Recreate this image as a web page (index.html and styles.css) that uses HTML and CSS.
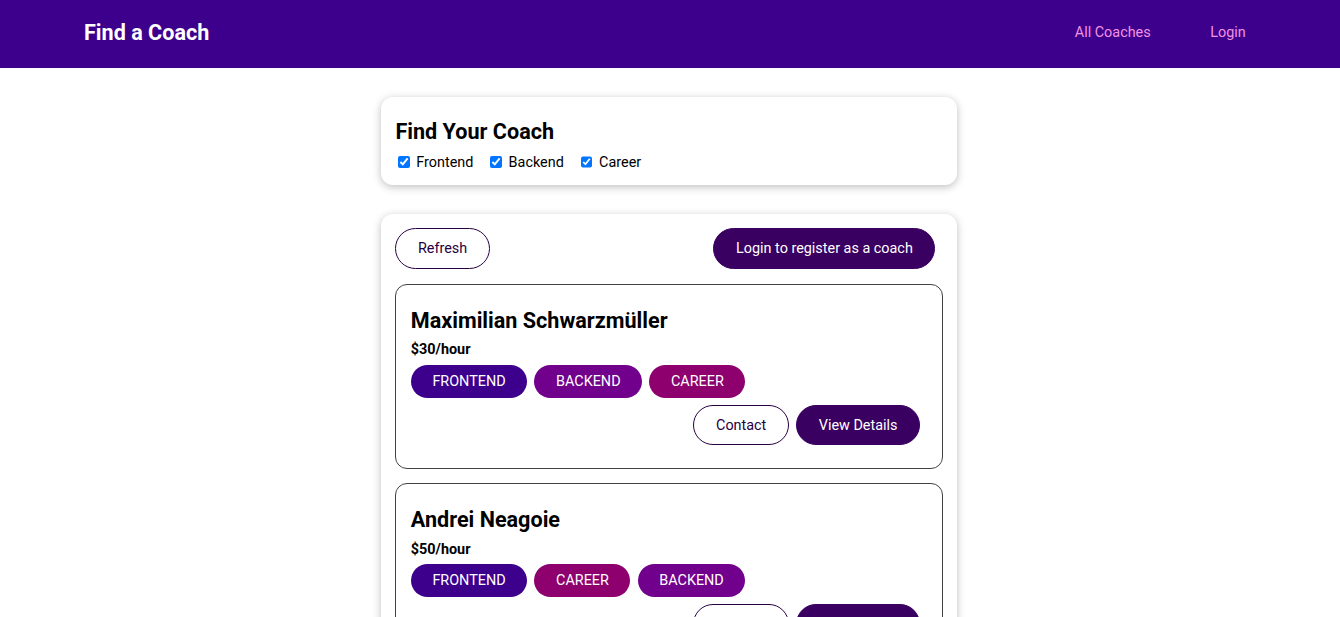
FILE: index.html
```html
<!DOCTYPE html>
<html lang="en">
<head>
<meta charset="utf-8">
<title>Find a Coach</title>
<link rel="stylesheet" href="styles.css">
</head>
<body>
<header class="site-header">
  <nav class="site-nav">
    <h1 class="brand"><a href="#">Find a Coach</a></h1>
    <ul class="nav-links">
      <li><a href="#">All Coaches</a></li>
      <li><a href="#">Login</a></li>
    </ul>
  </nav>
</header>
<main class="page">
  <section class="card filter-card">
    <h2 class="filter-title">Find Your Coach</h2>
    <div class="filter-options">
      <span class="filter-option"><input type="checkbox" id="frontend" checked><label for="frontend">Frontend</label></span>
      <span class="filter-option"><input type="checkbox" id="backend" checked><label for="backend">Backend</label></span>
      <span class="filter-option"><input type="checkbox" id="career" checked><label for="career">Career</label></span>
    </div>
  </section>
  <section class="card list-card">
    <div class="controls">
      <button class="btn btn-outline">Refresh</button>
      <button class="btn">Login to register as a coach</button>
    </div>
    <ul class="coach-list">
      <li class="coach">
        <h3 class="coach-name">Maximilian Schwarzmüller</h3>
        <h4 class="coach-rate">$30/hour</h4>
        <div class="badges">
          <span class="badge frontend">FRONTEND</span><span class="badge backend">BACKEND</span><span class="badge career">CAREER</span>
        </div>
        <div class="actions">
          <button class="btn btn-outline">Contact</button>
          <button class="btn">View Details</button>
        </div>
      </li>
      <li class="coach">
        <h3 class="coach-name">Andrei Neagoie</h3>
        <h4 class="coach-rate">$50/hour</h4>
        <div class="badges">
          <span class="badge frontend">FRONTEND</span><span class="badge career">CAREER</span><span class="badge backend">BACKEND</span>
        </div>
        <div class="actions">
          <button class="btn btn-outline">Contact</button>
          <button class="btn">View Details</button>
        </div>
      </li>
    </ul>
  </section>
</main>
</body>
</html>
```
FILE: styles.css
```css
* { box-sizing: border-box; }

html {
  font-family: "Roboto", "Liberation Sans", sans-serif;
  font-size: 14.4px;
}

body {
  margin: 0;
  color: #000;
}

.site-header {
  width: 100%;
  height: 68px;
  background-color: #3d008d;
  display: flex;
  justify-content: center;
  align-items: center;
  padding-bottom: 3px;
}

.site-nav {
  width: 90%;
  margin: auto;
  display: flex;
  justify-content: space-between;
  align-items: center;
}

.brand {
  margin: 0;
  font-size: 21.6px;
  font-weight: 700;
}

.brand a {
  color: #fff;
  text-decoration: none;
  display: inline-block;
  padding: 0 0 0 17px;
}

.nav-links {
  list-style: none;
  margin: 0 -2.5px 0 0;
  padding: 0;
  display: flex;
}

.nav-links li { margin: 0 7.2px; }

.nav-links a {
  text-decoration: none;
  color: #f391e3;
  display: inline-block;
  padding: 0 21.6px;
  font-size: 14.4px;
  border: 1px solid transparent;
}

.page {
  padding-right: 2px;
  padding-top: 0.1px;
}

.card {
  border-radius: 12px;
  box-shadow: 0 2px 8px rgba(0, 0, 0, 0.26);
  padding: 14.4px;
  margin: 28.8px auto;
  max-width: 576px;
  background: #fff;
}

.filter-title {
  margin: 8.2px 0 9.2px;
  font-size: 21.6px;
  font-weight: 700;
}

.filter-options {
  display: flex;
  align-items: center;
}

.filter-option {
  margin-right: 14.4px;
  display: inline-flex;
  align-items: center;
}

.filter-option input {
  width: 11.7px;
  height: 11.7px;
  margin: 0 3px 0 2.6px;
}

.filter-option label {
  margin-left: 3.6px;
  font-size: 14.4px;
  line-height: 17px;
}

.controls {
  display: flex;
  justify-content: space-between;
  padding-bottom: 1px;
}

.btn {
  font-family: inherit;
  font-size: 14.4px;
  line-height: 17px;
  padding: 10.8px 21.6px;
  background-color: #3a0061;
  border: 1px solid #3a0061;
  color: #fff;
  border-radius: 30px;
  margin-right: 7.2px;
  display: inline-block;
  cursor: pointer;
}

.btn-outline {
  background-color: transparent;
  border-color: #270041;
  color: #270041;
}

.coach-list {
  list-style: none;
  margin: 0;
  padding: 0;
}

.coach {
  margin: 14.4px 0;
  border: 1px solid #424242;
  border-radius: 12px;
  padding: 14.4px;
}

.coach-name {
  font-size: 21.6px;
  font-weight: 700;
  margin: 8.6px 0 8.2px;
}

.coach-rate {
  font-size: 14.4px;
  font-weight: 700;
  margin: 7.2px 0 6.2px;
}

.badges {
  margin: 6.2px 0;
}

.badge {
  display: inline-block;
  border-radius: 30px;
  padding: 8px 21.6px;
  margin-right: 7.2px;
  font-size: 14.4px;
  line-height: 17px;
  color: #fff;
}

.frontend { background-color: #3d008d; }
.backend { background-color: #71008d; }
.career { background-color: #8d006e; }

.actions {
  display: flex;
  justify-content: flex-end;
  margin: 7.2px 0 8.2px;
}
```
